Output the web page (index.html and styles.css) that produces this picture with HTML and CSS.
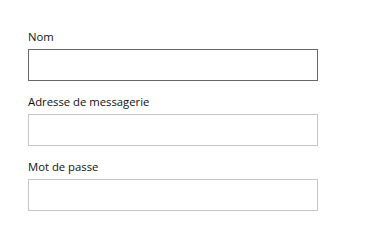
FILE: index.html
```html
<!DOCTYPE html>
<html>
<head>
  <title>Inscription</title>
  <link rel="stylesheet" href="styles.css">
</head>
<body>
  <form class="form">
    <div class="field">
      <label for="name">Nom</label>
      <input type="text" id="name" class="hover">
    </div>
    <div class="field">
      <label for="email">Adresse de messagerie</label>
      <input type="email" id="email">
    </div>
    <div class="field">
      <label for="password">Mot de passe</label>
      <input type="password" id="password">
    </div>
  </form>
</body>
</html>
```

FILE: styles.css
```css
body {
  background-color: #ffffff;
  margin: 0;
  font-family: "Open Sans", "Noto Sans", sans-serif;
  color: #000000;
}

.form {
  display: flex;
  flex-direction: column;
  gap: 13px;
  padding: 29px 0 0 28px;
}

.field {
  display: flex;
  flex-direction: column;
  gap: 4px;
}

.field label {
  font-size: 11.3px;
  line-height: 16px;
  color: #111111;
}

.field input {
  box-sizing: border-box;
  width: 290px;
  height: 32px;
  margin: 0;
  padding: 0 10px;
  border: 1px solid #c6c6c6;
  border-radius: 0;
  background-color: #ffffff;
  font-size: 14px;
  outline: none;
}

.field input.hover {
  border-color: #666666;
}
```
